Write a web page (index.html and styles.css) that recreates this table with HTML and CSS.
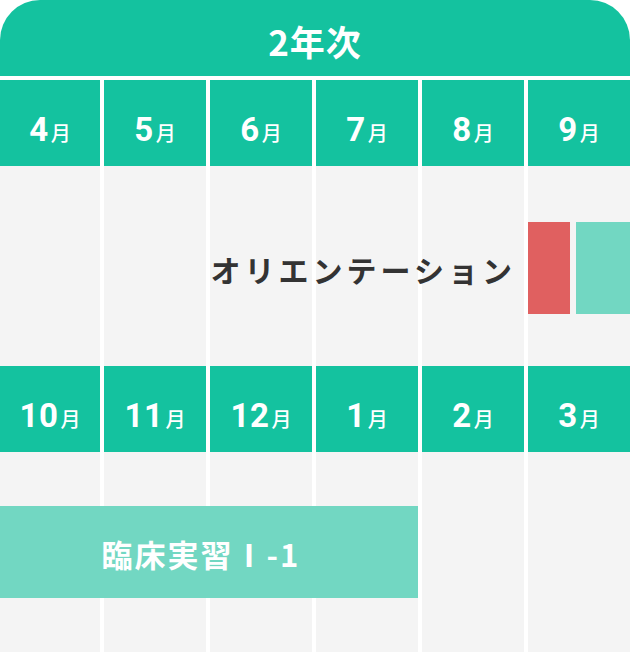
FILE: index.html
```html
<!DOCTYPE html>
<html lang="ja">
<head>
<meta charset="utf-8">
<title>2年次</title>
<link rel="stylesheet" href="styles.css">
</head>
<body>
<div class="schedule">
  <div class="year">2年次</div>

  <div class="months">
    <div class="month"><span class="num">4</span><span class="unit">月</span></div>
    <div class="month"><span class="num">5</span><span class="unit">月</span></div>
    <div class="month"><span class="num">6</span><span class="unit">月</span></div>
    <div class="month"><span class="num">7</span><span class="unit">月</span></div>
    <div class="month"><span class="num">8</span><span class="unit">月</span></div>
    <div class="month"><span class="num">9</span><span class="unit">月</span></div>
  </div>

  <div class="lane lane-first">
    <div class="col c1"></div><div class="col c2"></div><div class="col c3"></div>
    <div class="col c4"></div><div class="col c5"></div><div class="col c6"></div>
    <div class="label-orientation">オリエンテーション</div>
    <div class="bars">
      <div class="bar-red"></div>
      <div class="bar-teal"></div>
    </div>
  </div>

  <div class="months">
    <div class="month"><span class="num">10</span><span class="unit">月</span></div>
    <div class="month"><span class="num">11</span><span class="unit">月</span></div>
    <div class="month"><span class="num">12</span><span class="unit">月</span></div>
    <div class="month"><span class="num">1</span><span class="unit">月</span></div>
    <div class="month"><span class="num">2</span><span class="unit">月</span></div>
    <div class="month"><span class="num">3</span><span class="unit">月</span></div>
  </div>

  <div class="lane lane-second">
    <div class="col c1"></div><div class="col c2"></div><div class="col c3"></div>
    <div class="col c4"></div><div class="col c5"></div><div class="col c6"></div>
    <div class="event-practice">臨床実習Ⅰ-1</div>
  </div>
</div>
</body>
</html>
```

FILE: styles.css
```css
* { box-sizing: border-box; }

html, body {
  margin: 0;
  padding: 0;
  background: #ffffff;
}

.schedule {
  width: 630px;
  font-family: "Noto Sans CJK JP", "Noto Sans", sans-serif;
}

.year {
  height: 76px;
  background: #14c29f;
  border-radius: 40px 40px 0 0;
  color: #ffffff;
  font-weight: 700;
  font-size: 35px;
  letter-spacing: 1px;
  display: flex;
  align-items: center;
  justify-content: center;
  padding-top: 4px;
  margin-bottom: 4px;
}

.months {
  display: grid;
  grid-template-columns: 100px repeat(5, 102px);
  column-gap: 4px;
  height: 86px;
}

.month {
  background: #14c29f;
  color: #ffffff;
  display: flex;
  align-items: baseline;
  justify-content: center;
  padding-top: 33px;
  font-weight: 700;
}

.num {
  font-family: "Roboto", "Noto Sans", sans-serif;
  font-size: 33px;
  font-weight: 700;
  letter-spacing: 0.5px;
  line-height: 1;
}

.unit {
  font-size: 20px;
  font-weight: 500;
  margin-left: 2px;
  line-height: 1;
}

.lane {
  display: grid;
  grid-template-columns: 100px repeat(5, 102px);
  column-gap: 4px;
}

.lane-first { grid-template-rows: 56px 92px 52px; }
.lane-second { grid-template-rows: 54px 92px 54px; }

.col {
  background: #f4f4f4;
  grid-row: 1 / 4;
}
.c1 { grid-column: 1; }
.c2 { grid-column: 2; }
.c3 { grid-column: 3; }
.c4 { grid-column: 4; }
.c5 { grid-column: 5; }
.c6 { grid-column: 6; }

.label-orientation {
  grid-row: 2;
  grid-column: 1 / 6;
  display: flex;
  align-items: center;
  justify-content: flex-end;
  padding-right: 8px;
  padding-top: 2px;
  font-size: 30px;
  font-weight: 700;
  letter-spacing: 4px;
  color: #333333;
  z-index: 1;
}

.bars {
  grid-row: 2;
  grid-column: 6;
  display: flex;
  gap: 6px;
  z-index: 1;
}

.bar-red {
  width: 42px;
  background: #e06060;
}

.bar-teal {
  flex: 1;
  background: #72d7c2;
}

.event-practice {
  grid-row: 2;
  grid-column: 1 / 5;
  background: #72d7c2;
  color: #ffffff;
  font-size: 31px;
  font-weight: 700;
  letter-spacing: 2px;
  display: flex;
  align-items: center;
  justify-content: center;
  padding-right: 16px;
  padding-top: 2px;
  z-index: 1;
}
```
